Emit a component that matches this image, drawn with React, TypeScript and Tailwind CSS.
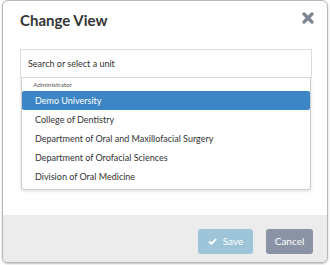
import React from 'react';

const units = [
  'Demo University',
  'College of Dentistry',
  'Department of Oral and Maxillofacial Surgery',
  'Department of Orofacial Sciences',
  'Division of Oral Medicine',
];

export default function App() {
  return (
    <div className="w-[330px] h-[265px] bg-white pl-[2px] pr-[2px] pt-0 font-['Lato',sans-serif]">
      <div className="w-[326px] h-[263px] border border-[#b8b8b8] rounded-[6px] overflow-hidden flex flex-col shadow-[0_1px_2px_rgba(0,0,0,0.25)] bg-white">
        {/* Header */}
        <div className="flex items-start justify-between pl-[17px] pr-[13px] pt-[9px] h-[48px]">
          <h2 className="text-[15px] font-bold text-[#333] leading-[20px]">Change View</h2>
          <svg width="12" height="12" viewBox="0 0 12 12" className="mt-[2px]">
            <path d="M2 2 L10 10 M10 2 L2 10" stroke="#7c8593" strokeWidth="3.2" strokeLinecap="round" />
          </svg>
        </div>

        {/* Body */}
        <div className="flex-1 pl-[17px] pr-[15px]">
          <div className="h-[29px] border border-[#dcdcdc] flex items-center pl-[7px] text-[9px] text-[#333]">
            Search or select a unit
          </div>
          <div className="mx-[1px] border border-t-0 border-[#cfcfcf] rounded-b-[3px] shadow-[0_1px_3px_rgba(0,0,0,0.15)] pb-[3px]">
            <div className="text-[6.5px] text-[#555] pl-[11px] h-[13px] leading-[13px]">Administrator</div>
            {units.map((u, i) => (
              <div
                key={u}
                className={`h-[19px] leading-[19px] pl-[13px] text-[9px] rounded-[2px] ${
                  i === 0 ? 'bg-[#3d86c6] text-white' : 'text-[#333]'
                }`}
              >
                {u}
              </div>
            ))}
          </div>
        </div>

        {/* Footer */}
        <div className="h-[47px] bg-[#ececec] flex items-start justify-end gap-[13px] pt-[14px] pr-[14px]">
          <button className="w-[55px] h-[25px] rounded-[3px] bg-[#9ec4d9] text-white text-[10px] flex items-center justify-center gap-[6px]">
            <svg width="9" height="7" viewBox="0 0 10 8">
              <path d="M1 4 L3.8 6.6 L9 1.2" stroke="white" strokeWidth="2.2" fill="none" />
            </svg>
            Save
          </button>
          <button className="w-[47px] h-[25px] rounded-[3px] bg-[#8a93a3] text-white text-[10px]">Cancel</button>
        </div>
      </div>
    </div>
  );
}
